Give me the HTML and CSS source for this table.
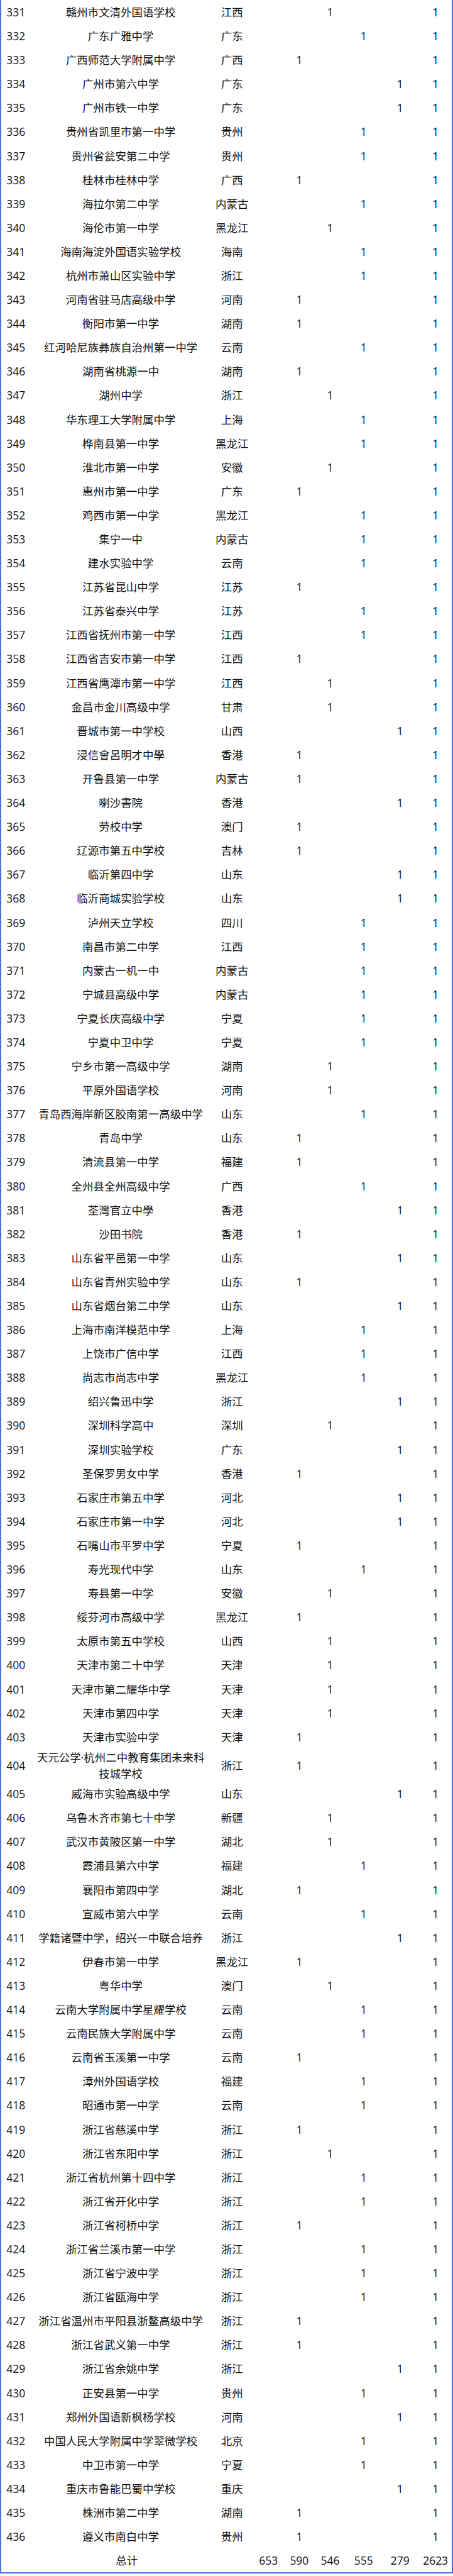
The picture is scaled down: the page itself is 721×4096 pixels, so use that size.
FILE: index.html
```html
<!DOCTYPE html>
<html lang="zh-CN">
<head>
<meta charset="utf-8">
<title>学校统计</title>
<link rel="stylesheet" href="styles.css">
</head>
<body>
<div class="table">
<div class="row"><span class="idx">331</span><span class="name">赣州市文清外国语学校</span><span>江西</span><span></span><span></span><span>1</span><span></span><span></span><span class="sum">1</span></div>
<div class="row"><span class="idx">332</span><span class="name">广东广雅中学</span><span>广东</span><span></span><span></span><span></span><span>1</span><span></span><span class="sum">1</span></div>
<div class="row"><span class="idx">333</span><span class="name">广西师范大学附属中学</span><span>广西</span><span></span><span>1</span><span></span><span></span><span></span><span class="sum">1</span></div>
<div class="row"><span class="idx">334</span><span class="name">广州市第六中学</span><span>广东</span><span></span><span></span><span></span><span></span><span>1</span><span class="sum">1</span></div>
<div class="row"><span class="idx">335</span><span class="name">广州市铁一中学</span><span>广东</span><span></span><span></span><span></span><span></span><span>1</span><span class="sum">1</span></div>
<div class="row"><span class="idx">336</span><span class="name">贵州省凯里市第一中学</span><span>贵州</span><span></span><span></span><span></span><span>1</span><span></span><span class="sum">1</span></div>
<div class="row"><span class="idx">337</span><span class="name">贵州省瓮安第二中学</span><span>贵州</span><span></span><span></span><span></span><span>1</span><span></span><span class="sum">1</span></div>
<div class="row"><span class="idx">338</span><span class="name">桂林市桂林中学</span><span>广西</span><span></span><span>1</span><span></span><span></span><span></span><span class="sum">1</span></div>
<div class="row"><span class="idx">339</span><span class="name">海拉尔第二中学</span><span>内蒙古</span><span></span><span></span><span></span><span>1</span><span></span><span class="sum">1</span></div>
<div class="row"><span class="idx">340</span><span class="name">海伦市第一中学</span><span>黑龙江</span><span></span><span></span><span>1</span><span></span><span></span><span class="sum">1</span></div>
<div class="row"><span class="idx">341</span><span class="name">海南海淀外国语实验学校</span><span>海南</span><span></span><span></span><span></span><span>1</span><span></span><span class="sum">1</span></div>
<div class="row"><span class="idx">342</span><span class="name">杭州市萧山区实验中学</span><span>浙江</span><span></span><span></span><span></span><span>1</span><span></span><span class="sum">1</span></div>
<div class="row"><span class="idx">343</span><span class="name">河南省驻马店高级中学</span><span>河南</span><span></span><span>1</span><span></span><span></span><span></span><span class="sum">1</span></div>
<div class="row"><span class="idx">344</span><span class="name">衡阳市第一中学</span><span>湖南</span><span></span><span>1</span><span></span><span></span><span></span><span class="sum">1</span></div>
<div class="row"><span class="idx">345</span><span class="name">红河哈尼族彝族自治州第一中学</span><span>云南</span><span></span><span></span><span></span><span>1</span><span></span><span class="sum">1</span></div>
<div class="row"><span class="idx">346</span><span class="name">湖南省桃源一中</span><span>湖南</span><span></span><span>1</span><span></span><span></span><span></span><span class="sum">1</span></div>
<div class="row"><span class="idx">347</span><span class="name">湖州中学</span><span>浙江</span><span></span><span></span><span>1</span><span></span><span></span><span class="sum">1</span></div>
<div class="row"><span class="idx">348</span><span class="name">华东理工大学附属中学</span><span>上海</span><span></span><span></span><span></span><span>1</span><span></span><span class="sum">1</span></div>
<div class="row"><span class="idx">349</span><span class="name">桦南县第一中学</span><span>黑龙江</span><span></span><span></span><span></span><span>1</span><span></span><span class="sum">1</span></div>
<div class="row"><span class="idx">350</span><span class="name">淮北市第一中学</span><span>安徽</span><span></span><span></span><span>1</span><span></span><span></span><span class="sum">1</span></div>
<div class="row"><span class="idx">351</span><span class="name">惠州市第一中学</span><span>广东</span><span></span><span>1</span><span></span><span></span><span></span><span class="sum">1</span></div>
<div class="row"><span class="idx">352</span><span class="name">鸡西市第一中学</span><span>黑龙江</span><span></span><span></span><span></span><span>1</span><span></span><span class="sum">1</span></div>
<div class="row"><span class="idx">353</span><span class="name">集宁一中</span><span>内蒙古</span><span></span><span></span><span></span><span>1</span><span></span><span class="sum">1</span></div>
<div class="row"><span class="idx">354</span><span class="name">建水实验中学</span><span>云南</span><span></span><span></span><span></span><span>1</span><span></span><span class="sum">1</span></div>
<div class="row"><span class="idx">355</span><span class="name">江苏省昆山中学</span><span>江苏</span><span></span><span>1</span><span></span><span></span><span></span><span class="sum">1</span></div>
<div class="row"><span class="idx">356</span><span class="name">江苏省泰兴中学</span><span>江苏</span><span></span><span></span><span></span><span>1</span><span></span><span class="sum">1</span></div>
<div class="row"><span class="idx">357</span><span class="name">江西省抚州市第一中学</span><span>江西</span><span></span><span></span><span></span><span>1</span><span></span><span class="sum">1</span></div>
<div class="row"><span class="idx">358</span><span class="name">江西省吉安市第一中学</span><span>江西</span><span></span><span>1</span><span></span><span></span><span></span><span class="sum">1</span></div>
<div class="row"><span class="idx">359</span><span class="name">江西省鹰潭市第一中学</span><span>江西</span><span></span><span></span><span>1</span><span></span><span></span><span class="sum">1</span></div>
<div class="row"><span class="idx">360</span><span class="name">金昌市金川高级中学</span><span>甘肃</span><span></span><span></span><span>1</span><span></span><span></span><span class="sum">1</span></div>
<div class="row"><span class="idx">361</span><span class="name">晋城市第一中学校</span><span>山西</span><span></span><span></span><span></span><span></span><span>1</span><span class="sum">1</span></div>
<div class="row"><span class="idx">362</span><span class="name">浸信會呂明才中學</span><span>香港</span><span></span><span>1</span><span></span><span></span><span></span><span class="sum">1</span></div>
<div class="row"><span class="idx">363</span><span class="name">开鲁县第一中学</span><span>内蒙古</span><span></span><span>1</span><span></span><span></span><span></span><span class="sum">1</span></div>
<div class="row"><span class="idx">364</span><span class="name">喇沙書院</span><span>香港</span><span></span><span></span><span></span><span></span><span>1</span><span class="sum">1</span></div>
<div class="row"><span class="idx">365</span><span class="name">劳校中学</span><span>澳门</span><span></span><span>1</span><span></span><span></span><span></span><span class="sum">1</span></div>
<div class="row"><span class="idx">366</span><span class="name">辽源市第五中学校</span><span>吉林</span><span></span><span>1</span><span></span><span></span><span></span><span class="sum">1</span></div>
<div class="row"><span class="idx">367</span><span class="name">临沂第四中学</span><span>山东</span><span></span><span></span><span></span><span></span><span>1</span><span class="sum">1</span></div>
<div class="row"><span class="idx">368</span><span class="name">临沂商城实验学校</span><span>山东</span><span></span><span></span><span></span><span></span><span>1</span><span class="sum">1</span></div>
<div class="row"><span class="idx">369</span><span class="name">泸州天立学校</span><span>四川</span><span></span><span></span><span></span><span>1</span><span></span><span class="sum">1</span></div>
<div class="row"><span class="idx">370</span><span class="name">南昌市第二中学</span><span>江西</span><span></span><span></span><span></span><span>1</span><span></span><span class="sum">1</span></div>
<div class="row"><span class="idx">371</span><span class="name">内蒙古一机一中</span><span>内蒙古</span><span></span><span></span><span></span><span>1</span><span></span><span class="sum">1</span></div>
<div class="row"><span class="idx">372</span><span class="name">宁城县高级中学</span><span>内蒙古</span><span></span><span></span><span></span><span>1</span><span></span><span class="sum">1</span></div>
<div class="row"><span class="idx">373</span><span class="name">宁夏长庆高级中学</span><span>宁夏</span><span></span><span></span><span></span><span>1</span><span></span><span class="sum">1</span></div>
<div class="row"><span class="idx">374</span><span class="name">宁夏中卫中学</span><span>宁夏</span><span></span><span></span><span></span><span>1</span><span></span><span class="sum">1</span></div>
<div class="row"><span class="idx">375</span><span class="name">宁乡市第一高级中学</span><span>湖南</span><span></span><span></span><span>1</span><span></span><span></span><span class="sum">1</span></div>
<div class="row"><span class="idx">376</span><span class="name">平原外国语学校</span><span>河南</span><span></span><span></span><span>1</span><span></span><span></span><span class="sum">1</span></div>
<div class="row"><span class="idx">377</span><span class="name">青岛西海岸新区胶南第一高级中学</span><span>山东</span><span></span><span></span><span></span><span>1</span><span></span><span class="sum">1</span></div>
<div class="row"><span class="idx">378</span><span class="name">青岛中学</span><span>山东</span><span></span><span>1</span><span></span><span></span><span></span><span class="sum">1</span></div>
<div class="row"><span class="idx">379</span><span class="name">清流县第一中学</span><span>福建</span><span></span><span>1</span><span></span><span></span><span></span><span class="sum">1</span></div>
<div class="row"><span class="idx">380</span><span class="name">全州县全州高级中学</span><span>广西</span><span></span><span></span><span></span><span>1</span><span></span><span class="sum">1</span></div>
<div class="row"><span class="idx">381</span><span class="name">荃灣官立中學</span><span>香港</span><span></span><span></span><span></span><span></span><span>1</span><span class="sum">1</span></div>
<div class="row"><span class="idx">382</span><span class="name">沙田书院</span><span>香港</span><span></span><span>1</span><span></span><span></span><span></span><span class="sum">1</span></div>
<div class="row"><span class="idx">383</span><span class="name">山东省平邑第一中学</span><span>山东</span><span></span><span></span><span></span><span></span><span>1</span><span class="sum">1</span></div>
<div class="row"><span class="idx">384</span><span class="name">山东省青州实验中学</span><span>山东</span><span></span><span>1</span><span></span><span></span><span></span><span class="sum">1</span></div>
<div class="row"><span class="idx">385</span><span class="name">山东省烟台第二中学</span><span>山东</span><span></span><span></span><span></span><span></span><span>1</span><span class="sum">1</span></div>
<div class="row"><span class="idx">386</span><span class="name">上海市南洋模范中学</span><span>上海</span><span></span><span></span><span></span><span>1</span><span></span><span class="sum">1</span></div>
<div class="row"><span class="idx">387</span><span class="name">上饶市广信中学</span><span>江西</span><span></span><span></span><span></span><span>1</span><span></span><span class="sum">1</span></div>
<div class="row"><span class="idx">388</span><span class="name">尚志市尚志中学</span><span>黑龙江</span><span></span><span></span><span></span><span>1</span><span></span><span class="sum">1</span></div>
<div class="row"><span class="idx">389</span><span class="name">绍兴鲁迅中学</span><span>浙江</span><span></span><span></span><span></span><span></span><span>1</span><span class="sum">1</span></div>
<div class="row"><span class="idx">390</span><span class="name">深圳科学高中</span><span>深圳</span><span></span><span></span><span>1</span><span></span><span></span><span class="sum">1</span></div>
<div class="row"><span class="idx">391</span><span class="name">深圳实验学校</span><span>广东</span><span></span><span></span><span></span><span></span><span>1</span><span class="sum">1</span></div>
<div class="row"><span class="idx">392</span><span class="name">圣保罗男女中学</span><span>香港</span><span></span><span>1</span><span></span><span></span><span></span><span class="sum">1</span></div>
<div class="row"><span class="idx">393</span><span class="name">石家庄市第五中学</span><span>河北</span><span></span><span></span><span></span><span></span><span>1</span><span class="sum">1</span></div>
<div class="row"><span class="idx">394</span><span class="name">石家庄市第一中学</span><span>河北</span><span></span><span></span><span></span><span></span><span>1</span><span class="sum">1</span></div>
<div class="row"><span class="idx">395</span><span class="name">石嘴山市平罗中学</span><span>宁夏</span><span></span><span>1</span><span></span><span></span><span></span><span class="sum">1</span></div>
<div class="row"><span class="idx">396</span><span class="name">寿光现代中学</span><span>山东</span><span></span><span></span><span></span><span>1</span><span></span><span class="sum">1</span></div>
<div class="row"><span class="idx">397</span><span class="name">寿县第一中学</span><span>安徽</span><span></span><span></span><span>1</span><span></span><span></span><span class="sum">1</span></div>
<div class="row"><span class="idx">398</span><span class="name">绥芬河市高级中学</span><span>黑龙江</span><span></span><span>1</span><span></span><span></span><span></span><span class="sum">1</span></div>
<div class="row"><span class="idx">399</span><span class="name">太原市第五中学校</span><span>山西</span><span></span><span></span><span>1</span><span></span><span></span><span class="sum">1</span></div>
<div class="row"><span class="idx">400</span><span class="name">天津市第二十中学</span><span>天津</span><span></span><span></span><span>1</span><span></span><span></span><span class="sum">1</span></div>
<div class="row"><span class="idx">401</span><span class="name">天津市第二耀华中学</span><span>天津</span><span></span><span></span><span>1</span><span></span><span></span><span class="sum">1</span></div>
<div class="row"><span class="idx">402</span><span class="name">天津市第四中学</span><span>天津</span><span></span><span></span><span>1</span><span></span><span></span><span class="sum">1</span></div>
<div class="row"><span class="idx">403</span><span class="name">天津市实验中学</span><span>天津</span><span></span><span>1</span><span></span><span></span><span></span><span class="sum">1</span></div>
<div class="row"><span class="idx">404</span><span class="name">天元公学·杭州二中教育集团未来科技城学校</span><span>浙江</span><span></span><span>1</span><span></span><span></span><span></span><span class="sum">1</span></div>
<div class="row"><span class="idx">405</span><span class="name">威海市实验高级中学</span><span>山东</span><span></span><span></span><span></span><span></span><span>1</span><span class="sum">1</span></div>
<div class="row"><span class="idx">406</span><span class="name">乌鲁木齐市第七十中学</span><span>新疆</span><span></span><span></span><span>1</span><span></span><span></span><span class="sum">1</span></div>
<div class="row"><span class="idx">407</span><span class="name">武汉市黄陂区第一中学</span><span>湖北</span><span></span><span></span><span>1</span><span></span><span></span><span class="sum">1</span></div>
<div class="row"><span class="idx">408</span><span class="name">霞浦县第六中学</span><span>福建</span><span></span><span></span><span></span><span>1</span><span></span><span class="sum">1</span></div>
<div class="row"><span class="idx">409</span><span class="name">襄阳市第四中学</span><span>湖北</span><span></span><span>1</span><span></span><span></span><span></span><span class="sum">1</span></div>
<div class="row"><span class="idx">410</span><span class="name">宣威市第六中学</span><span>云南</span><span></span><span></span><span></span><span>1</span><span></span><span class="sum">1</span></div>
<div class="row"><span class="idx">411</span><span class="name">学籍诸暨中学，绍兴一中联合培养</span><span>浙江</span><span></span><span></span><span></span><span></span><span>1</span><span class="sum">1</span></div>
<div class="row"><span class="idx">412</span><span class="name">伊春市第一中学</span><span>黑龙江</span><span></span><span>1</span><span></span><span></span><span></span><span class="sum">1</span></div>
<div class="row"><span class="idx">413</span><span class="name">粤华中学</span><span>澳门</span><span></span><span></span><span>1</span><span></span><span></span><span class="sum">1</span></div>
<div class="row"><span class="idx">414</span><span class="name">云南大学附属中学星耀学校</span><span>云南</span><span></span><span></span><span></span><span>1</span><span></span><span class="sum">1</span></div>
<div class="row"><span class="idx">415</span><span class="name">云南民族大学附属中学</span><span>云南</span><span></span><span></span><span></span><span>1</span><span></span><span class="sum">1</span></div>
<div class="row"><span class="idx">416</span><span class="name">云南省玉溪第一中学</span><span>云南</span><span></span><span>1</span><span></span><span></span><span></span><span class="sum">1</span></div>
<div class="row"><span class="idx">417</span><span class="name">漳州外国语学校</span><span>福建</span><span></span><span></span><span></span><span>1</span><span></span><span class="sum">1</span></div>
<div class="row"><span class="idx">418</span><span class="name">昭通市第一中学</span><span>云南</span><span></span><span></span><span></span><span>1</span><span></span><span class="sum">1</span></div>
<div class="row"><span class="idx">419</span><span class="name">浙江省慈溪中学</span><span>浙江</span><span></span><span>1</span><span></span><span></span><span></span><span class="sum">1</span></div>
<div class="row"><span class="idx">420</span><span class="name">浙江省东阳中学</span><span>浙江</span><span></span><span></span><span>1</span><span></span><span></span><span class="sum">1</span></div>
<div class="row"><span class="idx">421</span><span class="name">浙江省杭州第十四中学</span><span>浙江</span><span></span><span></span><span></span><span>1</span><span></span><span class="sum">1</span></div>
<div class="row"><span class="idx">422</span><span class="name">浙江省开化中学</span><span>浙江</span><span></span><span></span><span></span><span>1</span><span></span><span class="sum">1</span></div>
<div class="row"><span class="idx">423</span><span class="name">浙江省柯桥中学</span><span>浙江</span><span></span><span>1</span><span></span><span></span><span></span><span class="sum">1</span></div>
<div class="row"><span class="idx">424</span><span class="name">浙江省兰溪市第一中学</span><span>浙江</span><span></span><span></span><span></span><span>1</span><span></span><span class="sum">1</span></div>
<div class="row"><span class="idx">425</span><span class="name">浙江省宁波中学</span><span>浙江</span><span></span><span></span><span></span><span>1</span><span></span><span class="sum">1</span></div>
<div class="row"><span class="idx">426</span><span class="name">浙江省瓯海中学</span><span>浙江</span><span></span><span></span><span></span><span>1</span><span></span><span class="sum">1</span></div>
<div class="row"><span class="idx">427</span><span class="name">浙江省温州市平阳县浙鳌高级中学</span><span>浙江</span><span></span><span>1</span><span></span><span></span><span></span><span class="sum">1</span></div>
<div class="row"><span class="idx">428</span><span class="name">浙江省武义第一中学</span><span>浙江</span><span></span><span>1</span><span></span><span></span><span></span><span class="sum">1</span></div>
<div class="row"><span class="idx">429</span><span class="name">浙江省余姚中学</span><span>浙江</span><span></span><span></span><span></span><span></span><span>1</span><span class="sum">1</span></div>
<div class="row"><span class="idx">430</span><span class="name">正安县第一中学</span><span>贵州</span><span></span><span></span><span></span><span>1</span><span></span><span class="sum">1</span></div>
<div class="row"><span class="idx">431</span><span class="name">郑州外国语新枫杨学校</span><span>河南</span><span></span><span></span><span></span><span></span><span>1</span><span class="sum">1</span></div>
<div class="row"><span class="idx">432</span><span class="name">中国人民大学附属中学翠微学校</span><span>北京</span><span></span><span></span><span></span><span>1</span><span></span><span class="sum">1</span></div>
<div class="row"><span class="idx">433</span><span class="name">中卫市第一中学</span><span>宁夏</span><span></span><span></span><span></span><span>1</span><span></span><span class="sum">1</span></div>
<div class="row"><span class="idx">434</span><span class="name">重庆市鲁能巴蜀中学校</span><span>重庆</span><span></span><span></span><span></span><span></span><span>1</span><span class="sum">1</span></div>
<div class="row"><span class="idx">435</span><span class="name">株洲市第二中学</span><span>湖南</span><span></span><span>1</span><span></span><span></span><span></span><span class="sum">1</span></div>
<div class="row"><span class="idx">436</span><span class="name">遵义市南白中学</span><span>贵州</span><span></span><span>1</span><span></span><span></span><span></span><span class="sum">1</span></div>
<div class="row total"><span class="label">总计</span><span>653</span><span>590</span><span>546</span><span>555</span><span>279</span><span class="sum">2623</span></div>
</div>
</body>
</html>
```
FILE: styles.css
```css
html, body {
  margin: 0;
  padding: 0;
  background: #ffffff;
}

body {
  font-family: "Open Sans", "Noto Sans CJK SC", sans-serif;
  font-size: 17.47px;
  color: #111111;
}

.table {
  width: 721px;
  box-sizing: border-box;
  border-left: 2px solid #4a6fe3;
  border-right: 2px solid #4a6fe3;
  border-bottom: 2.4px solid #4a6fe3;
}

.row {
  display: grid;
  grid-template-columns: 54px 272.3px 81.8px 34.2px 64.2px 34.2px 72.2px 43.8px 60.3px;
  align-items: center;
  min-height: 38.1px;
  line-height: 26.2px;
  text-align: center;
  white-space: nowrap;
}

.row > span {
  display: block;
}

.row .idx {
  text-align: left;
  padding-left: 8.3px;
}

.row .name {
  white-space: normal;
}

.row .sum {
  padding-left: 8.7px;
}

.total .label {
  grid-column: span 3;
  padding-right: 8.6px;
}
```
